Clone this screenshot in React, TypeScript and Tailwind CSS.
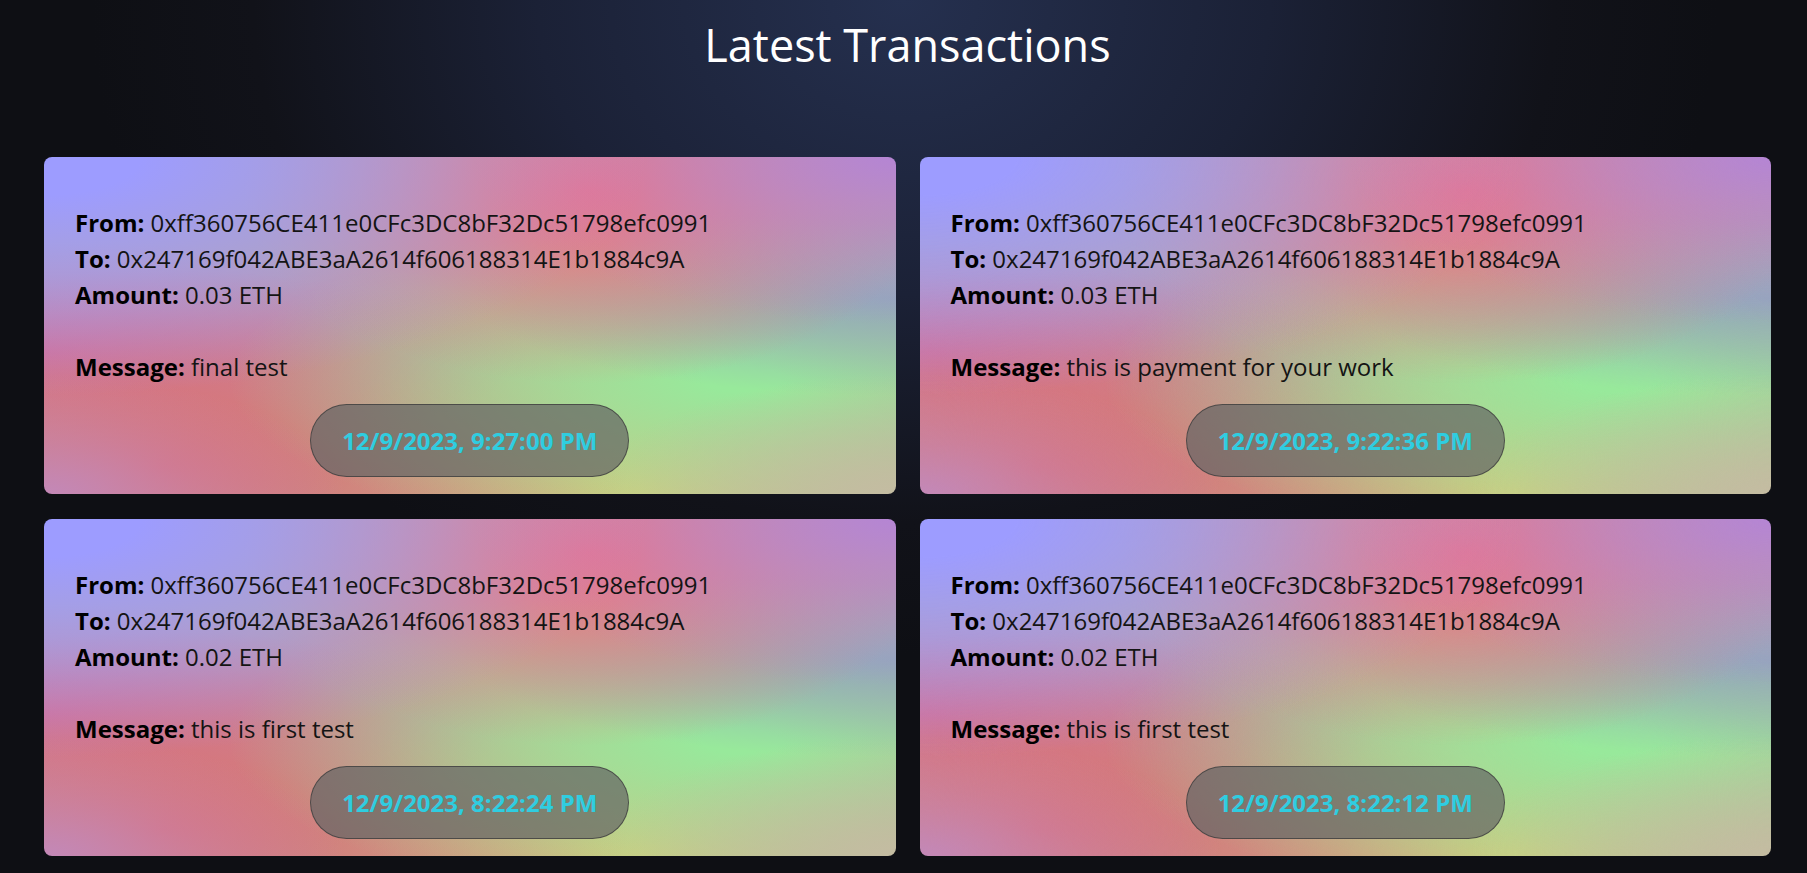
import React from "react";

type Tx = { from: string; to: string; amount: string; message: string; time: string };

const txs: Tx[] = [
  { from: "0xff360756CE411e0CFc3DC8bF32Dc51798efc0991", to: "0x247169f042ABE3aA2614f606188314E1b1884c9A", amount: "0.03 ETH", message: "final test", time: "12/9/2023, 9:27:00 PM" },
  { from: "0xff360756CE411e0CFc3DC8bF32Dc51798efc0991", to: "0x247169f042ABE3aA2614f606188314E1b1884c9A", amount: "0.03 ETH", message: "this is payment for your work", time: "12/9/2023, 9:22:36 PM" },
  { from: "0xff360756CE411e0CFc3DC8bF32Dc51798efc0991", to: "0x247169f042ABE3aA2614f606188314E1b1884c9A", amount: "0.02 ETH", message: "this is first test", time: "12/9/2023, 8:22:24 PM" },
  { from: "0xff360756CE411e0CFc3DC8bF32Dc51798efc0991", to: "0x247169f042ABE3aA2614f606188314E1b1884c9A", amount: "0.02 ETH", message: "this is first test", time: "12/9/2023, 8:22:12 PM" },
];

function Card({ tx }: { tx: Tx }) {
  return (
    <div className="rounded-lg bg-[#bba59c] bg-[radial-gradient(at_0%_0%,#9d9cff_0px,#9d9cff_8%,transparent_50%),radial-gradient(at_0%_100%,#c388b8_0px,transparent_25%),radial-gradient(at_100%_100%,#c4bca2_0px,transparent_25%),radial-gradient(at_100%_0%,#b585d4_0px,transparent_35%),radial-gradient(at_64%_10%,#f1717e_0px,transparent_45%),radial-gradient(at_100%_42%,#92a9bb_0px,transparent_35%),radial-gradient(at_82%_66%,#98e99b_0px,#98e99b_4%,transparent_52%),radial-gradient(at_14%_92%,#dd6c6c_0px,transparent_45%),radial-gradient(at_0%_58%,#d070a6_0px,transparent_40%),radial-gradient(at_70%_100%,#d9c877_0px,transparent_40%)] pt-[48px] px-[31px] pb-[17px] text-[24px] leading-[36px] text-[#141414]">
      <div>
        <span className="font-bold text-black">From:</span> {tx.from}
      </div>
      <div>
        <span className="font-bold text-black">To:</span> {tx.to}
      </div>
      <div>
        <span className="font-bold text-black">Amount:</span> {tx.amount}
      </div>
      <div className="mt-[36px]">
        <span className="font-bold text-black">Message:</span> {tx.message}
      </div>
      <div className="mt-[19px] flex justify-center">
        <div className="flex h-[73px] items-center rounded-full border border-[rgba(60,60,60,0.75)] bg-[rgba(100,100,100,0.7)] px-[31px] font-bold text-[#2fcde0]">
          {tx.time}
        </div>
      </div>
    </div>
  );
}

export default function App() {
  return (
    <div
      className="min-h-screen bg-[#0e0f14] bg-[radial-gradient(ellipse_45%_75%_at_50%_0%,#25304f_0%,#1b2136_45%,#111219_80%,#0e0f14_100%)] pl-[44px] pr-[36px] pt-[17px] pb-[17px] font-['Open_Sans',sans-serif]"
    >
      <h1 className="h-[56px] text-center text-[45px] font-normal leading-[56px] text-white">
        Latest Transactions
      </h1>
      <div className="mt-[84px] grid grid-cols-2 gap-x-[24px] gap-y-[25px]">
        {txs.map((tx, i) => (
          <Card key={i} tx={tx} />
        ))}
      </div>
    </div>
  );
}
